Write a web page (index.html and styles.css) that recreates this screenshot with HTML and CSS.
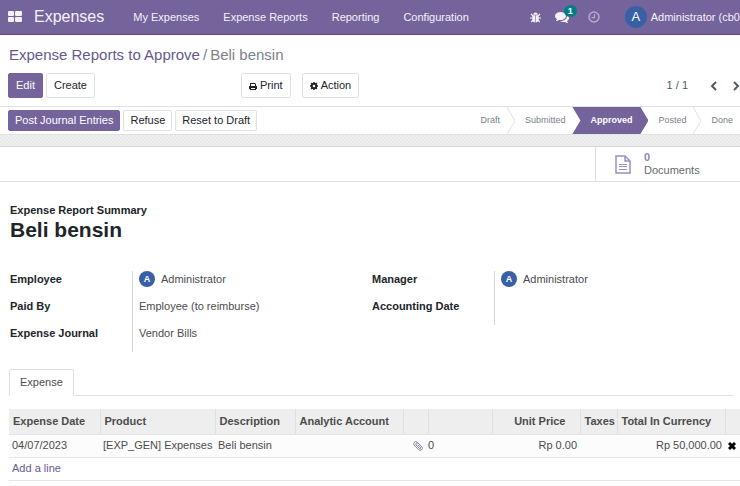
FILE: index.html
```
<!DOCTYPE html>
<html lang="en">

<head>
    <meta charset="UTF-8">
    <meta name="viewport" content="width=device-width, initial-scale=1.0">
    <title>Expenses - Beli bensin</title>
    <link rel="stylesheet" href="styles.css">
</head>

<body>

    <!-- Navbar -->
    <header class="navbar">
        <button type="button" class="apps-button" aria-label="Applications">
            <svg width="14" height="12" viewBox="0 0 14 12" fill="currentColor">
                <rect width="6" height="5" rx="1"/>
                <rect x="7" width="7" height="5" rx="1"/>
                <rect y="6" width="6" height="5" rx="1"/>
                <rect x="7" y="6" width="7" height="5" rx="1"/>
            </svg>
        </button>
        <a href="#" class="brand">Expenses</a>
        <nav class="menu">
            <a href="#">My Expenses</a>
            <a href="#">Expense Reports</a>
            <a href="#">Reporting</a>
            <a href="#">Configuration</a>
        </nav>
        <div class="systray">
            <button type="button" aria-label="Developer tools">
                <svg width="11" height="11" viewBox="0 0 22 22" fill="currentColor">
                    <path d="M6.500 5.500a4.500 4.500 0 0 1 9 0z"/>
                    <path d="M5 6.500h5.400V21C7 21 4.500 18 4.500 14zM11.600 6.500H17l.5 7.500c0 4-2.500 7-5.900 7z"/>
                    <path d="M2 4l4 4M20 4l-4 4M0 12h6M22 12h-6M2.500 20l4-4M19.500 20l-4-4" stroke="currentColor" stroke-width="2.400"/>
                </svg>
            </button>
            <button type="button" class="messages" aria-label="Messages">
                <svg width="14" height="14" viewBox="0 0 1792 1792" fill="currentColor">
                    <path d="M1408 768q0 139-94 257t-256.500 186.500-353.500 68.500q-86 0-176-16-124 88-278 128-36 9-86 16h-3q-11 0-20.500-8t-11.500-21q-1-3-1-6.500t.5-6.500 2-6l2.500-5 3.500-5.500 4-5 4.500-5 4-4.500q5-6 23-25t26-29.500 22.500-29 25-38.500 20.500-44q-124-72-195-177t-71-224q0-139 94-257t256.500-186.500 353.500-68.500 353.500 68.500 256.500 186.500 94 257zm384 256q0 120-71 224.500t-195 176.500q10 24 20.500 44t25 38.500 22.500 29 26 29.500 23 25q1 1 4 4.500t4.500 5 4 5 3.500 5.500l2.500 5 2 6 .5 6.500-1 6.500q-3 14-13 22t-22 7q-50-7-86-16-154-40-278-128-90 16-176 16-271 0-472-132 58 4 88 4 161 0 309-45t264-129q125-92 192-212t67-254q0-77-23-152 129 71 204 178t75 230z"/>
                </svg>
                <span class="badge">1</span>
            </button>
            <button type="button" class="activities" aria-label="Activities">
                <svg width="12" height="12" viewBox="0 0 24 24" fill="none" stroke="currentColor" stroke-width="3">
                    <circle cx="12" cy="12" r="10"/>
                    <path d="M13 6v7H7" stroke-width="2.500"/>
                </svg>
            </button>
            <button type="button" class="user-menu">
                <span class="avatar avatar-lg">A</span>
                <span>Administrator (cb0</span>
            </button>
        </div>
    </header>

    <!-- Control Panel -->
    <div class="control-panel">
        <nav class="breadcrumb">
            <a href="#">Expense Reports to Approve</a>
            <span>/</span>
            <span>Beli bensin</span>
        </nav>
        <div class="cp-bottom">
            <div class="cp-buttons">
                <button type="button" class="btn btn-primary">Edit</button>
                <button type="button" class="btn">Create</button>
            </div>
            <div class="cp-actions">
                <button type="button" class="btn">
                    <svg width="8" height="8" viewBox="0 0 8 8" fill="currentColor">
                        <path d="M1 1h5l1 1v2H6V2H2v2H1z"/>
                        <path d="M0 4h8v3H7v1H1V7H0zM2 6v1h4V6z" fill-rule="evenodd"/>
                    </svg>
                    Print
                </button>
                <button type="button" class="btn">
                    <svg width="8" height="8" viewBox="0 0 16 16" fill="none" stroke="currentColor">
                        <circle cx="8" cy="8" r="4.500" stroke-width="4"/>
                        <path d="M8 0v3M8 13v3M0 8h3M13 8h3M2.300 2.300l2 2M11.700 11.700l2 2M13.700 2.300l-2 2M4.300 11.700l-2 2" stroke-width="3"/>
                    </svg>
                    Action
                </button>
            </div>
            <div class="pager">
                <span>1 / 1</span>
                <button type="button" aria-label="Previous">
                    <svg width="7" height="10" viewBox="0 0 7 10" fill="none" stroke="currentColor" stroke-width="2"><path d="M6 1L2 5l4 4"/></svg>
                </button>
                <button type="button" aria-label="Next">
                    <svg width="7" height="10" viewBox="0 0 7 10" fill="none" stroke="currentColor" stroke-width="2"><path d="M1 1l4 4-4 4"/></svg>
                </button>
            </div>
        </div>
    </div>

    <!-- Status Bar -->
    <div class="statusbar">
        <div class="statusbar-buttons">
            <button type="button" class="btn btn-sm btn-primary">Post Journal Entries</button>
            <button type="button" class="btn btn-sm">Refuse</button>
            <button type="button" class="btn btn-sm">Reset to Draft</button>
        </div>
        <div class="steps">
            <button type="button" class="step">Draft</button>
            <svg class="chevron" viewBox="0 0 8 27"><path d="M0 0l8 14-8 13"/></svg>
            <button type="button" class="step">Submitted</button>
            <button type="button" class="step step-active">Approved</button>
            <button type="button" class="step">Posted</button>
            <svg class="chevron" viewBox="0 0 8 27"><path d="M0 0l8 14-8 13"/></svg>
            <button type="button" class="step">Done</button>
        </div>
    </div>
    <div class="texture"></div>

    <!-- Form Sheet -->
    <div class="button-box">
        <button type="button" class="stat-button">
            <svg width="16" height="19" viewBox="0 0 16 19" fill="none" stroke="currentColor">
                <path d="M1 1h9l5 5v12H1z" stroke-width="1.500"/>
                <path d="M10 1v5h5" stroke-width="1.500"/>
                <path d="M4 9.500h8M4 11.500h8M4 14.500h8"/>
            </svg>
            <span class="stat-info">
                <span class="stat-value">0</span>
                <span>Documents</span>
            </span>
        </button>
    </div>

    <main class="sheet">
        <div class="title-label">Expense Report Summary</div>
        <h1>Beli bensin</h1>

        <div class="groups">
            <dl class="group">
                <dt>Employee</dt>
                <dd><span class="avatar">A</span>Administrator</dd>
                <dt>Paid By</dt>
                <dd>Employee (to reimburse)</dd>
                <dt>Expense Journal</dt>
                <dd>Vendor Bills</dd>
            </dl>
            <dl class="group">
                <dt>Manager</dt>
                <dd><span class="avatar">A</span>Administrator</dd>
                <dt>Accounting Date</dt>
                <dd></dd>
            </dl>
        </div>

        <div class="tabs">
            <button type="button" class="tab">Expense</button>
        </div>
    </main>

    <div class="list">
        <table>
            <colgroup>
                <col class="col-date">
                <col class="col-product">
                <col class="col-description">
                <col class="col-analytic">
                <col class="col-icon">
                <col class="col-count">
                <col class="col-price">
                <col class="col-taxes">
                <col class="col-total">
                <col>
            </colgroup>
            <thead>
                <tr>
                    <th>Expense Date</th>
                    <th>Product</th>
                    <th>Description</th>
                    <th>Analytic Account</th>
                    <th></th>
                    <th></th>
                    <th class="number">Unit Price</th>
                    <th>Taxes</th>
                    <th class="number">Total In Currency</th>
                    <th></th>
                </tr>
            </thead>
            <tbody>
                <tr>
                    <td>04/07/2023</td>
                    <td>[EXP_GEN] Expenses</td>
                    <td>Beli bensin</td>
                    <td></td>
                    <td class="attach">
                        <button type="button" aria-label="Attachments">
                            <svg width="10" height="10" viewBox="0 0 20 20" fill="none" stroke="currentColor" stroke-width="2">
                                <path d="M16 10L8 2Q5 0 2.500 2.500T2 8l9 9q3 3 6 1t1-6L10 4Q8 3 6.500 4.500T6 8l7 7q2 1 3-1L9 7"/>
                            </svg>
                        </button>
                    </td>
                    <td class="count">0</td>
                    <td class="number">Rp 0.00</td>
                    <td></td>
                    <td class="number">Rp 50,000.00</td>
                    <td class="remove">
                        <button type="button" aria-label="Delete row">
                            <svg width="8" height="8" viewBox="0 0 8 8" stroke="currentColor" stroke-width="3"><path d="M1 1l6 6M7 1L1 7"/></svg>
                        </button>
                    </td>
                </tr>
                <tr class="add-row">
                    <td colspan="10"><a href="#">Add a line</a></td>
                </tr>
            </tbody>
        </table>
    </div>

</body>

</html>
```
FILE: styles.css
```
/* General Styling */
* {
    box-sizing: border-box;
}

body {
    margin: 0;
    font-family: "Liberation Sans", Arial, sans-serif;
    font-size: 11px;
    line-height: 13px;
    color: #4c4c4c;
    background-color: #fff;
    overflow: hidden;
}

button {
    font: inherit;
    color: inherit;
    background: none;
    border: none;
    padding: 0;
    white-space: nowrap;
    cursor: pointer;
}

a {
    color: #66598f;
    text-decoration: none;
}

svg {
    display: block;
    flex-shrink: 0;
}

/* Navbar */
.navbar {
    display: flex;
    align-items: center;
    height: 35px;
    padding-left: 8px;
    color: #f4f2f8;
    background-color: #75639c;
    border-bottom: 1px solid #5a4a80;
    white-space: nowrap;
}

.navbar a {
    color: inherit;
}

.apps-button {
    margin-right: 12px;
}

.brand {
    font-size: 16px;
    line-height: 20px;
    margin-right: 29px;
}

.menu {
    display: flex;
    gap: 24px;
}

.systray {
    display: flex;
    align-items: center;
    margin-left: auto;
}

.messages {
    position: relative;
    margin-left: 14px;
}

.badge {
    position: absolute;
    top: -5px;
    left: 9px;
    width: 13px;
    height: 12px;
    border-radius: 6px;
    background-color: #017e84;
    color: #fff;
    font-size: 9px;
    font-weight: bold;
    line-height: 12px;
}

.activities {
    margin-left: 19px;
    opacity: 0.5;
}

.user-menu {
    display: flex;
    align-items: center;
    gap: 4px;
    margin-left: 25px;
}

.avatar {
    display: inline-block;
    width: 16px;
    height: 16px;
    margin-right: 6px;
    border-radius: 50%;
    background-color: #3860a4;
    color: #fff;
    font-size: 9px;
    font-weight: bold;
    line-height: 16px;
    text-align: center;
}

.avatar-lg {
    width: 22px;
    height: 22px;
    margin-right: 0;
    font-size: 13px;
    font-weight: normal;
    line-height: 22px;
}

/* Control Panel */
.control-panel {
    padding: 10px 0 8px 8px;
    border-bottom: 1px solid #dee2e6;
}

.breadcrumb {
    display: flex;
    gap: 3px;
    font-size: 15px;
    line-height: 20px;
    margin-bottom: 8px;
    padding-left: 1px;
    color: #7c8287;
}

.cp-bottom {
    display: grid;
    grid-template-columns: 233px 1fr auto;
    align-items: center;
}

.cp-buttons {
    display: flex;
    gap: 3px;
}

.cp-actions {
    display: flex;
    gap: 11px;
}

.btn {
    display: flex;
    align-items: center;
    gap: 3px;
    height: 25px;
    padding: 0 7px;
    border: 1px solid #dee2e6;
    border-radius: 2px;
    color: #212529;
    background-color: #fff;
}

.btn-primary {
    color: #fff;
    background-color: #75639c;
    border-color: #75639c;
}

.btn-sm {
    height: 21px;
    padding: 0 6px;
}

.pager {
    display: flex;
    align-items: center;
    color: #4c5a67;
}

.pager span {
    margin-right: 22px;
}

.pager button + button {
    margin-left: 16px;
}

/* Status Bar */
.statusbar {
    display: flex;
    justify-content: space-between;
    height: 28px;
    padding-left: 8px;
    border-bottom: 1px solid #dee2e6;
}

.statusbar-buttons {
    display: flex;
    align-items: center;
    gap: 3px;
}

.steps {
    display: flex;
}

.step {
    padding: 0 7px 0 10px;
    font-size: 9px;
    color: #7c8287;
}

.step-active {
    padding: 0 16px 0 18px;
    color: #fff;
    font-weight: bold;
    background-color: #75639c;
    clip-path: polygon(0 0, calc(100% - 8px) 0, 100% 50%, calc(100% - 8px) 100%, 0 100%, 8px 50%);
}

.chevron {
    width: 8px;
    height: 27px;
    fill: none;
    stroke: #dee2e6;
}

.texture {
    height: 12px;
    background: repeating-conic-gradient(#e8e8e8 0 25%, #f0f0f0 0 50%) 0 0 / 4px 4px;
    border-bottom: 1px solid #d5d6da;
}

/* Form Sheet */
.button-box {
    display: flex;
    justify-content: flex-end;
    height: 35px;
    border-bottom: 1px solid #dee2e6;
}

.stat-button {
    display: flex;
    align-items: center;
    gap: 13px;
    width: 145px;
    padding-left: 19px;
    border-left: 1px solid #dee2e6;
    color: #9a90c0;
    text-align: left;
}

.stat-info {
    display: flex;
    flex-direction: column;
    color: #666b70;
}

.stat-value {
    color: #8f83b5;
    font-weight: bold;
}

.sheet {
    padding: 22px 7px 0 9px;
}

.title-label {
    padding-left: 1px;
    color: #212529;
    font-weight: bold;
}

h1 {
    margin: 0 0 28px;
    padding-left: 1px;
    font-size: 21px;
    line-height: 26px;
    color: #212529;
}

.groups {
    display: grid;
    grid-template-columns: 1fr 1fr;
    align-items: start;
    margin-bottom: 17px;
}

.group {
    display: grid;
    grid-template-columns: 123px 1fr;
    grid-auto-rows: 27px;
    margin: 0;
}

.group dt {
    padding: 1px 0 0 1px;
    color: #212529;
    font-weight: bold;
    line-height: 14px;
}

.group dd {
    display: flex;
    align-items: flex-start;
    margin: 0;
    padding: 0 0 0 6px;
    border-left: 1px solid #d5d7da;
    line-height: 16px;
}

.tabs {
    display: flex;
    border-bottom: 1px solid #dee2e6;
}

.tab {
    height: 27px;
    margin-bottom: -1px;
    padding: 0 10px;
    border: 1px solid #dee2e6;
    border-bottom-color: #fff;
    border-radius: 2px 2px 0 0;
}

/* Expense Lines */
.list {
    padding: 13px 0 0 9px;
}

table {
    width: 100%;
    table-layout: fixed;
    border-collapse: collapse;
}

th,
td {
    height: 23px;
    padding: 0 3px;
    border-bottom: 1px solid #e6e6e6;
    text-align: left;
    white-space: nowrap;
}

th {
    height: 25px;
    padding: 0 4px;
    background-color: #eee;
    border-right: 1px solid #dfe0e2;
}

th:last-child {
    border-right: none;
}

td {
    background-color: #fcfcfc;
}

.add-row td {
    background-color: #fff;
}

.number {
    text-align: right;
}

th.number {
    padding-right: 14px;
}

td.attach,
td.count,
td.remove {
    padding: 0;
}

.attach button {
    display: block;
    margin-left: auto;
    margin-right: 5px;
    color: #8c86a8;
}

.remove button {
    display: block;
    margin-left: 3px;
    color: #000;
}

.col-date {
    width: 91px;
}

.col-product {
    width: 115px;
}

.col-description {
    width: 80px;
}

.col-analytic {
    width: 108px;
}

.col-icon {
    width: 25px;
}

.col-count {
    width: 64px;
}

.col-price {
    width: 88px;
}

.col-taxes {
    width: 37px;
}

.col-total {
    width: 108px;
}
```
